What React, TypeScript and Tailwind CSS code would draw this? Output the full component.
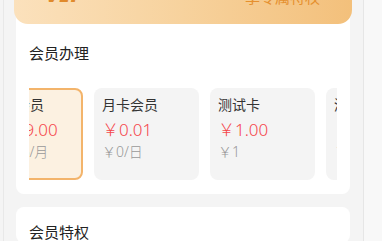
import React from 'react';

type Plan = { name: string; price: string; unit: string; active?: boolean };

const plans: Plan[] = [
  { name: '年卡会员', price: '￥199.00', unit: '￥16.6/月', active: true },
  { name: '月卡会员', price: '￥0.01', unit: '￥0/日' },
  { name: '测试卡', price: '￥1.00', unit: '￥1' },
  { name: '测试会员', price: '￥2.00', unit: '￥2' },
];

const PlanCard: React.FC<{ plan: Plan }> = ({ plan }) => (
  <div
    className={
      plan.active
        ? 'flex h-[92px] w-[105px] shrink-0 flex-col rounded-lg border-2 border-[#f3b46b] bg-[#fcf1e1] px-2 pt-[5px]'
        : 'flex h-[92px] w-[105px] shrink-0 flex-col rounded-lg bg-[#f4f4f4] px-2 pt-[7px]'
    }
  >
    <span className="text-[14px] leading-[20px] text-[#333]">{plan.name}</span>
    <span className="mt-[3px] text-[17px] font-light leading-[24px] text-[#f5484d]">{plan.price}</span>
    <span className="text-[14px] font-light leading-[20px] text-[#999]">{plan.unit}</span>
  </div>
);

export default function App() {
  return (
    <div
      className="flex h-[241px] w-[382px] overflow-hidden bg-[#f4f4f4]"
      style={{ fontFamily: '"Noto Sans", "Noto Sans CJK SC", sans-serif' }}
    >
      {/* left gutter */}
      <div className="w-[3px] shrink-0 bg-[#f4f4f4]" />
      <div className="w-px shrink-0 bg-[#e8e8e8]" />

      {/* page */}
      <div className="flex w-[359px] shrink-0 flex-col pl-3 pr-[13px]">
        <div className="rounded-b-lg bg-white pb-[14px]">
          {/* vip banner */}
          <div className="-mx-[2px] -mt-[56px] flex h-[80px] items-end justify-between rounded-b-[14px] bg-gradient-to-r from-[#fbe1bc] via-[#f7d29d] to-[#f3c07b] pb-[19px] pl-[31px] pr-[32px]">
            <span className="text-[26px] font-bold italic leading-none text-[#e08a2c]">VIP</span>
            <span className="text-[15px] leading-none text-[#e5902f]">享专属特权</span>
          </div>

          <h2 className="mt-[18px] pl-[13px] text-[15px] leading-[22px] text-[#222]">会员办理</h2>

          <div className="ml-[13px] mt-[24px] w-[308px] overflow-hidden">
            <div className="-ml-[51px] flex gap-[11px]">
              {plans.map((p) => (
                <PlanCard key={p.name} plan={p} />
              ))}
            </div>
          </div>
        </div>

        <div className="mt-[13px] h-[60px] rounded-lg bg-white pt-[14px]">
          <h2 className="pl-[13px] text-[15px] leading-[22px] text-[#222]">会员特权</h2>
        </div>
      </div>

      {/* scrollbar track */}
      <div className="w-px shrink-0 bg-[#e6e6e6]" />
      <div className="flex-1 bg-[#f8f8f8]" />
    </div>
  );
}
